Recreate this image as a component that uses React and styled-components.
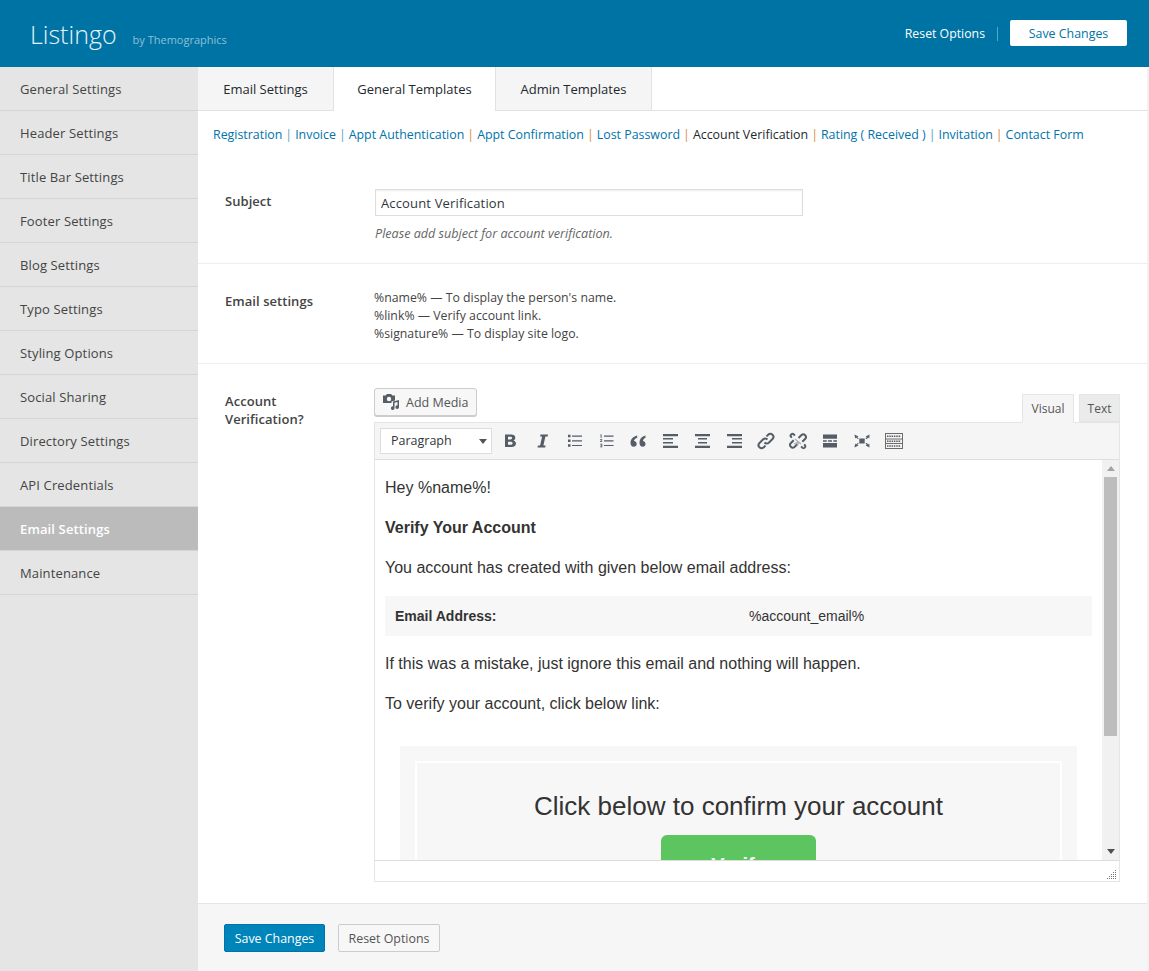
import React from 'react'
import styled, { createGlobalStyle } from 'styled-components'

const GlobalStyle = createGlobalStyle`
html, body {
    margin: 0;
    padding: 0;
    background: #f1f1f1;
    font-family: "Open Sans", "Noto Sans", sans-serif;
    font-size: 13px;
    color: #444;
}
* { box-sizing: border-box; }
`

const sideItems = ['General Settings', 'Header Settings', 'Title Bar Settings', 'Footer Settings', 'Blog Settings', 'Typo Settings', 'Styling Options', 'Social Sharing', 'Directory Settings', 'API Credentials', 'Email Settings', 'Maintenance']
const links = ['Registration', 'Invoice', 'Appt Authentication', 'Appt Confirmation', 'Lost Password', 'Account Verification', 'Rating ( Received )', 'Invitation', 'Contact Form']

const Icon = ({ children }) => (
    <ToolIcon viewBox="0 0 20 20" fill="#555d66">{children}</ToolIcon>
)

const App = () => (
    <Page>
        <GlobalStyle />
        <Header>
            <Brand>
                <Logo>Listingo</Logo>
                <By>by Themographics</By>
            </Brand>
            <HeaderActions>
                <ResetLink>Reset Options</ResetLink>
                <HeaderSave>Save Changes</HeaderSave>
            </HeaderActions>
        </Header>
        <Body>
            <Sidebar>
                {sideItems.map((item) => (
                    <SideItem key={item} $active={item === 'Email Settings'}>{item}</SideItem>
                ))}
            </Sidebar>
            <Main>
                <Tabs>
                    <Tab $width="136px">Email Settings</Tab>
                    <Tab $active $width="162px">General Templates</Tab>
                    <Tab $width="156px">Admin Templates</Tab>
                </Tabs>
                <SubNav>
                    {links.map((link, i) => (
                        <React.Fragment key={link}>
                            {i > 0 && <Sep $orange={i > 2 && i !== 7}>|</Sep>}
                            <SubLink $current={link === 'Account Verification'}>{link}</SubLink>
                        </React.Fragment>
                    ))}
                </SubNav>
                <SubjectRow>
                    <Label $top="3px">Subject</Label>
                    <Field>
                        <TextInput readOnly value="Account Verification" />
                        <Hint>Please add subject for account verification.</Hint>
                    </Field>
                </SubjectRow>
                <SettingsRow>
                    <Label $top="3px">Email settings</Label>
                    <CodeList>
                        <div>%name% — To display the person's name.</div>
                        <div>%link% — Verify account link.</div>
                        <div>%signature% — To display site logo.</div>
                    </CodeList>
                </SettingsRow>
                <EditorRow>
                    <Label $top="4px">Account<br />Verification?</Label>
                    <EditorWrap>
                        <EditorTop>
                            <MediaButton>
                                <svg width="20" height="20" viewBox="0 0 20 20" fill="#555d66">
                                    <path fillRule="evenodd" d="M2 3.5h2.500L6 2h4l1.500 1.500H14v5l-3.500 1V11H2zM8 4.800a2.200 2.200 0 1 0 0 4.400 2.200 2.200 0 0 0 0-4.400z" />
                                    <path d="M12 9.500l6-1.500v7.200a1.800 1.800 0 1 1-1.500-1.800V10l-3 .8v5.400a1.800 1.800 0 1 1-1.500-1.800z" />
                                </svg>
                                Add Media
                            </MediaButton>
                            <ModeTabs>
                                <ModeTab $active $width="52px">Visual</ModeTab>
                                <ModeTab $width="41px">Text</ModeTab>
                            </ModeTabs>
                        </EditorTop>
                        <EditorBox>
                            <Toolbar>
                                <FormatSelect>Paragraph<Caret /></FormatSelect>
                                <Icon><path d="M5 3.500h6.200c2.500 0 4.100 1.200 4.100 3.200 0 1.300-.7 2.200-1.800 2.700 1.500.5 2.500 1.700 2.500 3.200 0 2.200-1.800 3.400-4.400 3.400H5zm3 2.200v2.800h2.300c1.100 0 1.800-.5 1.800-1.400 0-.9-.7-1.400-1.800-1.400zm0 5v3h2.500c1.300 0 2.100-.5 2.100-1.500s-.8-1.500-2.100-1.500z" /></Icon>
                                <Icon><path d="M8.500 3.500H16l-.4 2h-2.200l-2 9h2.200l-.4 2H5.500l.4-2h2.200l2-9H8.100z" /></Icon>
                                <Icon><path d="M4 3.800h2.500v2.500H4zm0 4.700h2.500V11H4zm0 4.700h2.500v2.500H4zM8 4.500h10v1.200H8zm0 4.700h10v1.200H8zm0 4.700h10v1.200H8z" /></Icon>
                                <Icon><path d="M8 4.500h9.500v1.200H8zm0 4.700h9.500v1.200H8zm0 4.700h9.500v1.200H8zM4.300 3.500h1.300v3.600h-.9V4.400h-.4zM4 8.200h2.300v.7L5 10.300h1.300v.8H4v-.7l1.300-1.400H4zm0 4.500h2.300v3.500H4v-.7h1.400v-.7h-.9v-.6h.9v-.7H4z" /></Icon>
                                <Icon><path d="M9.200 4.500C5.500 5.300 2.500 8 2.500 12c0 2.400 1.400 3.800 3.200 3.800s3-1.300 3-3c0-1.600-1.100-2.800-2.700-2.900.3-1.500 1.700-2.600 3.200-3.100zm8.300 0c-3.700.8-6 3.500-6 7.500 0 2.400 1.400 3.800 3.200 3.800s2.800-1.300 2.800-3c0-1.600-1.100-2.800-2.500-2.900.3-1.500 1-2.600 2.500-3.100z" /></Icon>
                                <Icon><path d="M3 3h15v2.200H3zm0 4h10v1.500H3zm0 4h10v1.500H3zm0 3.800h15V17H3z" /></Icon>
                                <Icon><path d="M3 3h15v2.200H3zm3 4h9v1.500H6zm0 4h9v1.500H6zm-3 3.800h15V17H3z" /></Icon>
                                <Icon><path d="M3 3h15v2.200H3zm5 4h10v1.500H8zm0 4h10v1.500H8zm-5 3.800h15V17H3z" /></Icon>
                                <ToolIcon viewBox="0 0 20 20" fill="none" stroke="#555d66" strokeWidth="2">
                                    <path d="M8.500 11.500a3 3 0 0 0 4.300.2l3.700-3.700a3 3 0 0 0-4.300-4.300l-1.700 1.700" />
                                    <path d="M11.500 8.500a3 3 0 0 0-4.300-.2l-3.700 3.700a3 3 0 0 0 4.300 4.300l1.700-1.700" />
                                </ToolIcon>
                                <ToolIcon viewBox="0 0 20 20" fill="none" stroke="#555d66" strokeWidth="2">
                                    <path d="M10.500 7l3-3a2.700 2.700 0 0 1 3.800 3.800l-3 3" />
                                    <path d="M9.500 13l-3 3a2.700 2.700 0 0 1-3.800-3.800l3-3" />
                                    <path d="M4 6.500L3.200 6a1.800 1.800 0 0 1 2.600-2.600l1 1.300" />
                                    <path d="M16 13.500l.8.500a1.800 1.800 0 0 1-2.600 2.600l-1-1.300" />
                                    <path d="M7 8l6 5M6 13l4-2M9 15l2-4" stroke="#a9adb2" strokeWidth="1.200" />
                                </ToolIcon>
                                <Icon><path d="M3 3.500h14v4.300H3zm0 5.700h3.800v1.500H3zm5 0h4v1.500H8zm5.300 0H17v1.500h-3.700zM3 12h14v4.500H3z" /></Icon>
                                <Icon><path d="M7.300 7.500h5.400v5H7.300zM2.500 3.500l3.900 2-1 .9L7 8H5.800L4 6.600l-.9 1zM17.500 3.500l-.2 4.100-.9-1L14.800 8h-1.400l1.300-1.600-1-.9zM2.500 16.500l.6-4.100.9 1L5.800 12H7l-1.600 1.600 1 .9zM17.500 16.500l-3.800-2 1-.9-1.300-1.600h1.400l1.600 1.400.9-1z" /></Icon>
                                <ToolIcon viewBox="0 0 20 20" fill="none" stroke="#6e6a66" strokeWidth="1">
                                    <rect x="1.500" y="2.500" width="17" height="15" />
                                    <path d="M1.500 8h17M1.500 12.500h17" />
                                    <path d="M3 5.200h14M3 10.200h14M3 15h14" strokeDasharray="1.500 .8" strokeWidth="1.600" stroke="#555d66" />
                                </ToolIcon>
                            </Toolbar>
                            <ContentArea>
                                <Content>
                                    <Para>Hey %name%!</Para>
                                    <Para><strong>Verify Your Account</strong></Para>
                                    <Para>You account has created with given below email address:</Para>
                                    <InfoRow>
                                        <InfoKey>Email Address:</InfoKey>
                                        <span>%account_email%</span>
                                    </InfoRow>
                                    <Para>If this was a mistake, just ignore this email and nothing will happen.</Para>
                                    <Para>To verify your account, click below link:</Para>
                                    <ConfirmOuter>
                                        <ConfirmInner>
                                            <ConfirmTitle>Click below to confirm your account</ConfirmTitle>
                                            <VerifyButton>Verify</VerifyButton>
                                        </ConfirmInner>
                                    </ConfirmOuter>
                                </Content>
                                <Scrollbar>
                                    <ScrollArrow $up />
                                    <ScrollThumb />
                                    <ScrollArrow />
                                </Scrollbar>
                            </ContentArea>
                            <StatusBar>
                                <svg width="10" height="10" viewBox="0 0 10 10" fill="#777">
                                    <path d="M8 1h1v1H8zM6 3h1v1H6zm2 0h1v1H8zM4 5h1v1H4zm2 0h1v1H6zm2 0h1v1H8zM2 7h1v1H2zm2 0h1v1H4zm2 0h1v1H6zm2 0h1v1H8zM0 9h1v1H0zm2 0h1v1H2zm2 0h1v1H4zm2 0h1v1H6zm2 0h1v1H8z" />
                                </svg>
                            </StatusBar>
                        </EditorBox>
                    </EditorWrap>
                </EditorRow>
                <Footer>
                    <PrimaryButton>Save Changes</PrimaryButton>
                    <SecondaryButton>Reset Options</SecondaryButton>
                </Footer>
            </Main>
        </Body>
    </Page>
)

const Page = styled.div`
width: 1149px;
height: 971px;
overflow: hidden;
`
const Header = styled.header`
height: 67px;
background: #0073a5;
display: flex;
align-items: center;
justify-content: space-between;
padding: 0 22px 0 30px;
`
const Brand = styled.div`
display: flex;
align-items: baseline;
gap: 16px;
`
const Logo = styled.div`
font-size: 25px;
font-weight: 300;
color: #e6f4fa;
`
const By = styled.div`
font-size: 11px;
color: #8cc0d8;
`
const HeaderActions = styled.div`
display: flex;
align-items: center;
margin-top: -1px;
`
const ResetLink = styled.a`
color: #fff;
font-size: 12.3px;
padding-right: 12px;
border-right: 1px solid #5ba3c4;
margin: 2px 12px 0 0;
line-height: 14px;
`
const HeaderSave = styled.button`
width: 117px;
height: 26px;
background: #fff;
border: 0;
border-radius: 2px;
color: #0073a5;
font: inherit;
font-size: 12.4px;
padding: 0;
`
const Body = styled.div`
display: flex;
height: 904px;
`
const Sidebar = styled.nav`
width: 198px;
flex: none;
background: #e5e5e5;
`
const SideItem = styled.div`
height: 44px;
line-height: 45px;
padding-left: 20px;
letter-spacing: .13px;
border-bottom: 1px solid #d5d5d5;
background: ${({ $active }) => ($active ? '#bbb' : 'transparent')};
color: ${({ $active }) => ($active ? '#fff' : '#444')};
font-weight: ${({ $active }) => ($active ? 600 : 400)};
`
const Main = styled.main`
width: 949px;
flex: none;
background: #fff;
display: flex;
flex-direction: column;
`
const Tabs = styled.div`
display: flex;
height: 44px;
background: #fff;
border-bottom: 1px solid #e2e2e2;
`
const Tab = styled.div`
width: ${({ $width }) => $width};
height: ${({ $active }) => ($active ? '44px' : '43px')};
line-height: 45px;
text-align: center;
color: #23282d;
background: ${({ $active }) => ($active ? '#fff' : '#f5f5f5')};
border-right: 1px solid #e2e2e2;
`
const SubNav = styled.div`
height: 48px;
padding: 15px 0 0 15px;
font-size: 12.4px;
line-height: 18px;
white-space: nowrap;
`
const SubLink = styled.a`
color: ${({ $current }) => ($current ? '#23282d' : '#0073aa')};
`
const Sep = styled.span`
color: ${({ $orange }) => ($orange ? '#d98a3d' : '#5a9fc4')};
margin: 0 3px;
`
const SubjectRow = styled.section`
display: flex;
height: 105px;
padding: 30px 0 0 27px;
border-bottom: 1px solid #eee;
`
const SettingsRow = styled.section`
display: flex;
height: 100px;
padding: 25px 0 0 27px;
border-bottom: 1px solid #eee;
`
const EditorRow = styled.section`
display: flex;
height: 540px;
padding: 24px 0 0 27px;
border-bottom: 1px solid #e5e5e5;
`
const Label = styled.div`
width: 149px;
flex: none;
font-weight: 600;
letter-spacing: .05px;
line-height: 18px;
color: #444;
padding-top: ${({ $top }) => $top};
`
const Field = styled.div`
display: flex;
flex-direction: column;
margin-left: 1px;
`
const TextInput = styled.input`
width: 428px;
height: 27px;
border: 1px solid #ddd;
box-shadow: inset 0 1px 2px rgba(0, 0, 0, .07);
padding: 0 5px;
font: inherit;
letter-spacing: .15px;
color: #32373c;
outline: none;
`
const Hint = styled.div`
margin-top: 9px;
font-size: 12.6px;
line-height: 17px;
font-style: italic;
color: #666;
`
const CodeList = styled.div`
font-size: 12.3px;
line-height: 18px;
color: #444;
`
const EditorWrap = styled.div`
width: 746px;
`
const EditorTop = styled.div`
display: flex;
justify-content: space-between;
align-items: flex-end;
height: 35px;
margin-bottom: -1px;
position: relative;
z-index: 1;
`
const MediaButton = styled.button`
align-self: flex-start;
display: flex;
align-items: center;
gap: 5px;
height: 28px;
width: 103px;
padding: 0 0 0 6px;
background: #f7f7f7;
border: 1px solid #ccc;
border-radius: 3px;
box-shadow: 0 1px 0 #ccc;
font: inherit;
font-size: 12.5px;
color: #555;
`
const ModeTabs = styled.div`
display: flex;
gap: 5px;
`
const ModeTab = styled.div`
width: ${({ $width }) => $width};
height: ${({ $active }) => ($active ? '29px' : '28px')};
margin-bottom: ${({ $active }) => ($active ? 0 : '1px')};
text-align: center;
line-height: 27px;
font-size: 12px;
color: #555;
background: ${({ $active }) => ($active ? '#f5f5f5' : '#ebebeb')};
border: 1px solid #e5e5e5;
border-bottom-color: ${({ $active }) => ($active ? '#f5f5f5' : '#e5e5e5')};
`
const EditorBox = styled.div`
height: 460px;
border: 1px solid #e5e5e5;
display: flex;
flex-direction: column;
`
const Toolbar = styled.div`
height: 37px;
flex: none;
display: flex;
align-items: center;
background: #f5f5f5;
border-bottom: 1px solid #ddd;
padding-left: 5px;
gap: 12px;
`
const FormatSelect = styled.div`
position: relative;
width: 112px;
height: 26px;
margin-right: -4px;
line-height: 24px;
padding-left: 10px;
font-size: 12.5px;
color: #32373c;
background: #fff;
border: 1px solid #ddd;
`
const Caret = styled.span`
position: absolute;
right: 4px;
top: 10px;
border: 4px solid transparent;
border-top: 5px solid #555;
border-bottom: 0;
`
const ToolIcon = styled.svg`
width: 20px;
height: 20px;
flex: none;
`
const ContentArea = styled.div`
position: relative;
height: 400px;
flex: none;
overflow: hidden;
background: #fff;
`
const Content = styled.div`
padding: 18px 27px 0 10px;
font-family: "Liberation Sans", Arial, sans-serif;
font-size: 16px;
line-height: 20px;
color: #333;
`
const Para = styled.p`
margin: 0 0 20px;
`
const InfoRow = styled.div`
display: flex;
height: 40px;
align-items: center;
background: #f7f7f7;
padding-left: 10px;
margin: -2px 0 18px;
font-size: 14px;
`
const InfoKey = styled.strong`
width: 354px;
`
const ConfirmOuter = styled.div`
margin: 32px 15px 0;
padding: 15px;
height: 200px;
background: #f7f7f7;
`
const ConfirmInner = styled.div`
border: 2px solid #fff;
height: 200px;
padding-top: 27px;
text-align: center;
`
const ConfirmTitle = styled.div`
font-size: 26px;
line-height: 32px;
color: #333;
`
const VerifyButton = styled.div`
width: 155px;
height: 60px;
margin: 13px auto 0;
background: #5cc560;
border-radius: 6px;
color: #fff;
font-weight: 700;
font-size: 20px;
line-height: 60px;
`
const Scrollbar = styled.div`
position: absolute;
top: 0;
right: 0;
bottom: 0;
width: 17px;
background: #f1f1f1;
display: flex;
flex-direction: column;
align-items: center;
justify-content: space-between;
`
const ScrollArrow = styled.span`
margin: 6px 0;
border: 4px solid transparent;
border-bottom: ${({ $up }) => ($up ? '5px solid #a3a3a3' : '0')};
border-top: ${({ $up }) => ($up ? '0' : '5px solid #505050')};
`
const ScrollThumb = styled.div`
position: absolute;
top: 17px;
left: 2px;
width: 13px;
height: 259px;
background: #bdbdbd;
`
const StatusBar = styled.div`
flex: 1;
background: #fff;
border-top: 1px solid #ddd;
display: flex;
justify-content: flex-end;
align-items: flex-end;
padding: 0 2px 2px 0;
`
const Footer = styled.div`
flex: 1;
display: flex;
align-items: flex-start;
gap: 13px;
padding: 20px 0 0 26px;
background: #f6f6f6;
`
const PrimaryButton = styled.button`
width: 101px;
height: 28px;
background: #0085ba;
border: 1px solid #0073aa;
border-radius: 2px;
color: #fff;
font: inherit;
font-size: 12.4px;
padding: 0;
`
const SecondaryButton = styled.button`
width: 102px;
height: 28px;
background: #f7f7f7;
border: 1px solid #ccc;
border-radius: 2px;
color: #555;
font: inherit;
font-size: 12.4px;
padding: 0;
`

export default App
